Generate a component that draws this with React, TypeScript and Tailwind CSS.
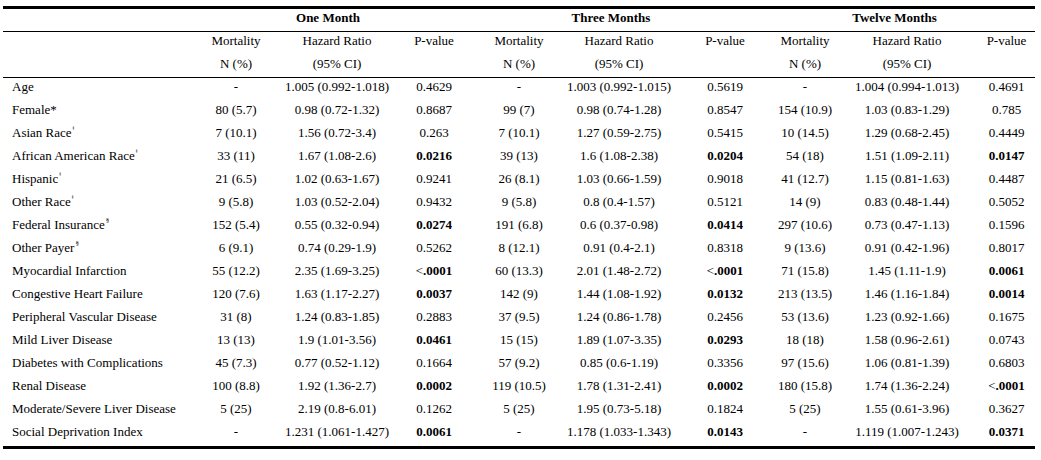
type Cell = string | { b: string };

type Row = { label: string; mark?: string; cells: Cell[] };

const rows: Row[] = [
  { label: "Age", cells: ["-", "1.005 (0.992-1.018)", "0.4629", "-", "1.003 (0.992-1.015)", "0.5619", "-", "1.004 (0.994-1.013)", "0.4691"] },
  { label: "Female*", cells: ["80 (5.7)", "0.98 (0.72-1.32)", "0.8687", "99 (7)", "0.98 (0.74-1.28)", "0.8547", "154 (10.9)", "1.03 (0.83-1.29)", "0.785"] },
  { label: "Asian Race", mark: "ǂ", cells: ["7 (10.1)", "1.56 (0.72-3.4)", "0.263", "7 (10.1)", "1.27 (0.59-2.75)", "0.5415", "10 (14.5)", "1.29 (0.68-2.45)", "0.4449"] },
  { label: "African American Race", mark: "ǂ", cells: ["33 (11)", "1.67 (1.08-2.6)", { b: "0.0216" }, "39 (13)", "1.6 (1.08-2.38)", { b: "0.0204" }, "54 (18)", "1.51 (1.09-2.11)", { b: "0.0147" }] },
  { label: "Hispanic", mark: "ǂ", cells: ["21 (6.5)", "1.02 (0.63-1.67)", "0.9241", "26 (8.1)", "1.03 (0.66-1.59)", "0.9018", "41 (12.7)", "1.15 (0.81-1.63)", "0.4487"] },
  { label: "Other Race", mark: "ǂ", cells: ["9 (5.8)", "1.03 (0.52-2.04)", "0.9432", "9 (5.8)", "0.8 (0.4-1.57)", "0.5121", "14 (9)", "0.83 (0.48-1.44)", "0.5052"] },
  { label: "Federal Insurance", mark: "§", cells: ["152 (5.4)", "0.55 (0.32-0.94)", { b: "0.0274" }, "191 (6.8)", "0.6 (0.37-0.98)", { b: "0.0414" }, "297 (10.6)", "0.73 (0.47-1.13)", "0.1596"] },
  { label: "Other Payer", mark: "§", cells: ["6 (9.1)", "0.74 (0.29-1.9)", "0.5262", "8 (12.1)", "0.91 (0.4-2.1)", "0.8318", "9 (13.6)", "0.91 (0.42-1.96)", "0.8017"] },
  { label: "Myocardial Infarction", cells: ["55 (12.2)", "2.35 (1.69-3.25)", { b: "<.0001" }, "60 (13.3)", "2.01 (1.48-2.72)", { b: "<.0001" }, "71 (15.8)", "1.45 (1.11-1.9)", { b: "0.0061" }] },
  { label: "Congestive Heart Failure", cells: ["120 (7.6)", "1.63 (1.17-2.27)", { b: "0.0037" }, "142 (9)", "1.44 (1.08-1.92)", { b: "0.0132" }, "213 (13.5)", "1.46 (1.16-1.84)", { b: "0.0014" }] },
  { label: "Peripheral Vascular Disease", cells: ["31 (8)", "1.24 (0.83-1.85)", "0.2883", "37 (9.5)", "1.24 (0.86-1.78)", "0.2456", "53 (13.6)", "1.23 (0.92-1.66)", "0.1675"] },
  { label: "Mild Liver Disease", cells: ["13 (13)", "1.9 (1.01-3.56)", { b: "0.0461" }, "15 (15)", "1.89 (1.07-3.35)", { b: "0.0293" }, "18 (18)", "1.58 (0.96-2.61)", "0.0743"] },
  { label: "Diabetes with Complications", cells: ["45 (7.3)", "0.77 (0.52-1.12)", "0.1664", "57 (9.2)", "0.85 (0.6-1.19)", "0.3356", "97 (15.6)", "1.06 (0.81-1.39)", "0.6803"] },
  { label: "Renal Disease", cells: ["100 (8.8)", "1.92 (1.36-2.7)", { b: "0.0002" }, "119 (10.5)", "1.78 (1.31-2.41)", { b: "0.0002" }, "180 (15.8)", "1.74 (1.36-2.24)", { b: "<.0001" }] },
  { label: "Moderate/Severe Liver Disease", cells: ["5 (25)", "2.19 (0.8-6.01)", "0.1262", "5 (25)", "1.95 (0.73-5.18)", "0.1824", "5 (25)", "1.55 (0.61-3.96)", "0.3627"] },
  { label: "Social Deprivation Index", cells: ["-", "1.231 (1.061-1.427)", { b: "0.0061" }, "-", "1.178 (1.033-1.343)", { b: "0.0143" }, "-", "1.119 (1.007-1.243)", { b: "0.0371" }] },
];

// label | mort | HR | p  (x3)
const cols = "grid grid-cols-[187px_92px_110px_84px_86px_114px_98px_62px_142px_57px]";
const rowH = "h-[23px] pt-[1px] leading-[15px]";

function Value({ c }: { c: Cell }) {
  if (typeof c === "string") return <>{c}</>;
  if (c.b.startsWith("<")) {
    return (
      <>
        &lt;<b className="font-bold">{c.b.slice(1)}</b>
      </>
    );
  }
  return <b className="font-bold">{c.b}</b>;
}

export default function App() {
  return (
    <div className="bg-white w-[1041px] h-[460px] pt-[6px] pl-[3px] text-black text-[13px] [font-family:'Liberation_Serif','Times_New_Roman',serif]">
      <div className="w-[1032px] border-t-[3px] border-b-[3px] border-black">
        <div className={`${cols} ${rowH} border-b border-black font-bold text-center`}>
          <div />
          <div className="col-span-3 pr-[10px]">One Month</div>
          <div className="col-span-3 pr-[28px]">Three Months</div>
          <div className="col-span-3 pr-[20px]">Twelve Months</div>
        </div>
        <div className={`${cols} ${rowH} text-center`}>
          <div />
          {[0, 1, 2].map((g) => (
            <div key={g} className="contents">
              <div>Mortality</div>
              <div>Hazard Ratio</div>
              <div>P-value</div>
            </div>
          ))}
        </div>
        <div className={`${cols} ${rowH} text-center border-b border-black`}>
          <div />
          {[0, 1, 2].map((g) => (
            <div key={g} className="contents">
              <div>N (%)</div>
              <div>(95% CI)</div>
              <div />
            </div>
          ))}
        </div>
        {rows.map((r) => (
          <div key={r.label} className={`${cols} ${rowH} text-center`}>
            <div className="text-left pl-[9px] whitespace-nowrap">
              {r.label}
              {r.mark && <sup className="text-[7px] leading-none align-[4px] ml-[1px]">{r.mark}</sup>}
            </div>
            {r.cells.map((c, i) => (
              <div key={i} className="whitespace-nowrap">
                <Value c={c} />
              </div>
            ))}
          </div>
        ))}
      </div>
    </div>
  );
}
